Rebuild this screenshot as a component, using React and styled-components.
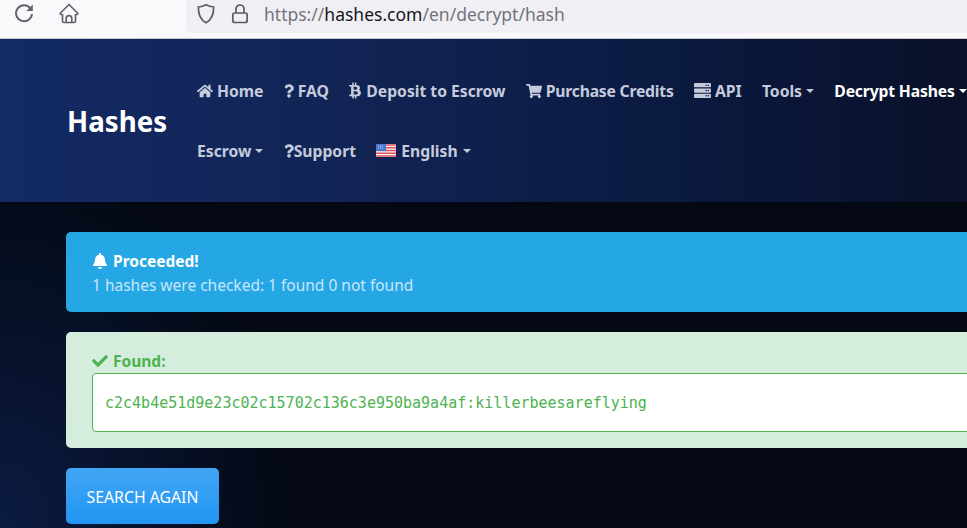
import React from "react";
import styled, { createGlobalStyle } from "styled-components";
import { FaHome, FaQuestion, FaBtc, FaShoppingCart, FaServer, FaBell, FaCheck } from "react-icons/fa";

const Global = createGlobalStyle`
  html, body {
    margin: 0;
    padding: 0;
    height: 528px;
    overflow: hidden;
    background: #030812;
  }
  body {
    font-family: "Noto Sans", "Open Sans", sans-serif;
  }
`;

const Page = styled.div`
  width: 967px;
  height: 528px;
  overflow: hidden;
  display: flex;
  flex-direction: column;
`;

const BrowserBar = styled.div`
  height: 39px;
  box-sizing: border-box;
  flex: none;
  display: flex;
  background: #f9f9fb;
  border-bottom: 1px solid #c8c8cc;
`;

const ToolButtons = styled.div`
  width: 186px;
  flex: none;
  display: flex;
  gap: 25px;
  padding: 3px 0 0 14px;
  box-sizing: border-box;
  color: #63636e;
`;

const AddressBar = styled.div`
  flex: 1;
  height: 33px;
  box-sizing: border-box;
  display: flex;
  align-items: center;
  padding: 0 0 6px 10px;
  gap: 15px;
  background: #f0f0f4;
  border-bottom-left-radius: 5px;
  color: #5b5b66;
`;

const Url = styled.span`
  font-size: 17.5px;
  color: #73737d;
  white-space: nowrap;
  b {
    font-weight: 400;
    color: #15141a;
  }
`;

const Header = styled.header`
  height: 163px;
  flex: none;
  display: flex;
  align-items: center;
  padding-left: 67px;
  background: linear-gradient(90deg, #142a64 0%, #112455 35%, #0b1a40 70%, #0a1029 100%);
`;

const Brand = styled.div`
  width: 130px;
  flex: none;
  font-size: 27.7px;
  font-weight: 700;
  color: #fff;
  margin-top: 1px;
`;

const Nav = styled.nav`
  width: 790px;
  flex: none;
  display: flex;
  flex-direction: column;
`;

const NavRow = styled.div`
  height: 60px;
  display: flex;
  align-items: center;
  gap: 20.3px;
  white-space: nowrap;
`;

const NavItem = styled.span`
  display: inline-flex;
  align-items: center;
  gap: ${(p) => p.$gap ?? 4}px;
  font-size: 15.7px;
  font-weight: 700;
  letter-spacing: ${(p) => p.$track ?? 0}px;
  color: ${(p) => (p.$active ? "#fff" : "#c5cbdc")};
  svg {
    flex: none;
  }
`;

const QuestionMark = styled(FaQuestion)`
  width: 10px;
  height: 14px;
`;

const BitcoinMark = styled(FaBtc)`
  width: 12px;
  height: 17px;
`;

const Caret = styled.i`
  width: 0;
  height: 0;
  border-top: 4px solid currentColor;
  border-left: 4px solid transparent;
  border-right: 4px solid transparent;
`;

const Main = styled.main`
  flex: 1;
  padding: 30px 0 0 66px;
  display: flex;
  flex-direction: column;
  align-items: flex-start;
  background:
    radial-gradient(ellipse 300px 380px at 0 100%, #0b1b42 0%, rgba(11, 27, 66, 0) 100%),
    #030812;
`;

const Alert = styled.div`
  width: 1000px;
  box-sizing: border-box;
  border-radius: 5px;
  margin-bottom: 20px;
  background: ${(p) => p.$bg};
  padding: 18px 26px 16px;
  font-size: 15.5px;
`;

const AlertTitle = styled.div`
  display: flex;
  align-items: center;
  gap: 5px;
  height: 22px;
  font-weight: 700;
  color: ${(p) => p.$color};
`;

const AlertText = styled.div`
  height: 24px;
  line-height: 26px;
  color: #c9e6f8;
`;

const HashBox = styled.div`
  height: 59px;
  box-sizing: border-box;
  display: flex;
  align-items: center;
  padding: 0 12px;
  margin-top: 1px;
  background: #fff;
  border: 1px solid #4cb74f;
  border-radius: 4px;
  font-family: "DejaVu Sans Mono", monospace;
  font-size: 15px;
  color: #4cb350;
`;

const Button = styled.button`
  width: 153px;
  height: 56px;
  padding: 2px 0 0;
  border: 0;
  border-radius: 5px;
  background: linear-gradient(180deg, #42a5f5 0%, #2196f3 100%);
  color: #fff;
  font-family: inherit;
  font-size: 15.8px;
`;

const ReloadIcon = () => (
  <svg width="20" height="20" viewBox="0 0 20 20" fill="none" stroke="currentColor" strokeWidth="2">
    <path d="M16.500 5.500A8 8 0 1 0 18 11" />
    <path d="M18.800 1.500V8h-6.500z" fill="currentColor" stroke="none" />
  </svg>
);

const HouseIcon = () => (
  <svg width="20" height="21" viewBox="0 0 20 21" fill="none" stroke="currentColor" strokeWidth="1.700" strokeLinejoin="round">
    <path d="M10 1.500L18.500 10c.6.6.2 1.500-.6 1.500H16.500v6.500a1.500 1.500 0 0 1-1.500 1.500H5A1.500 1.500 0 0 1 3.500 18V11.500H2.100c-.8 0-1.200-.9-.6-1.500z" />
    <path d="M7.200 19.500v-4a2.800 2.800 0 0 1 5.600 0v4" />
  </svg>
);

const ShieldIcon = () => (
  <svg width="20" height="22" viewBox="0 0 20 22" fill="none" stroke="currentColor" strokeWidth="1.700">
    <path d="M10 1.800c2.400 1.300 4.800 2 7.600 2.200.2 7.200-1.800 12.600-7.600 15.800C4.200 16.600 2.200 11.200 2.400 4c2.800-.2 5.200-.9 7.600-2.200z" />
  </svg>
);

const LockIcon = () => (
  <svg width="18" height="22" viewBox="0 0 18 22" fill="none" stroke="currentColor" strokeWidth="1.700">
    <path d="M5 10V6a4 4 0 0 1 8 0v4" />
    <rect x="1.800" y="10" width="14.400" height="9.500" rx="2" />
  </svg>
);

const Flag = () => (
  <svg width="20" height="13" viewBox="0 0 20 13">
    <rect width="20" height="13" fill="#f4f4f8" />
    <path d="M0 1h20M0 3.800h20M0 6.500h20M0 9.300h20M0 12h20" stroke="#e0505a" strokeWidth="1.400" />
    <rect width="10" height="7" fill="#4a78d0" />
    <path d="M2 2h6M2 4h6" stroke="#c8d8f4" strokeWidth="1" strokeDasharray="1 1" />
  </svg>
);

export default function App() {
  return (
    <Page>
      <Global />
      <BrowserBar>
        <ToolButtons>
          <ReloadIcon />
          <HouseIcon />
        </ToolButtons>
        <AddressBar>
          <ShieldIcon />
          <LockIcon />
          <Url>
            https://<b>hashes.com</b>/en/decrypt/hash
          </Url>
        </AddressBar>
      </BrowserBar>
      <Header>
        <Brand>Hashes</Brand>
        <Nav>
          <NavRow>
            <NavItem><FaHome size={16} />Home</NavItem>
            <NavItem><QuestionMark />FAQ</NavItem>
            <NavItem $gap={5}><BitcoinMark />Deposit to Escrow</NavItem>
            <NavItem $track={-0.2}><FaShoppingCart size={16} />Purchase Credits</NavItem>
            <NavItem><FaServer size={17} />API</NavItem>
            <NavItem>Tools<Caret /></NavItem>
            <NavItem $active $track={-0.15}>Decrypt Hashes<Caret /></NavItem>
          </NavRow>
          <NavRow>
            <NavItem>Escrow<Caret /></NavItem>
            <NavItem $gap={0}><QuestionMark />Support</NavItem>
            <NavItem $gap={5}><Flag />English<Caret /></NavItem>
          </NavRow>
        </Nav>
      </Header>
      <Main>
        <Alert $bg="#25a7e6">
          <AlertTitle $color="#fff"><FaBell size={16} />Proceeded!</AlertTitle>
          <AlertText>1 hashes were checked: 1 found 0 not found</AlertText>
        </Alert>
        <Alert $bg="#d5eddc">
          <AlertTitle $color="#4cb350"><FaCheck size={16} />Found:</AlertTitle>
          <HashBox>c2c4b4e51d9e23c02c15702c136c3e950ba9a4af:killerbeesareflying</HashBox>
        </Alert>
        <Button>SEARCH AGAIN</Button>
      </Main>
    </Page>
  );
}
